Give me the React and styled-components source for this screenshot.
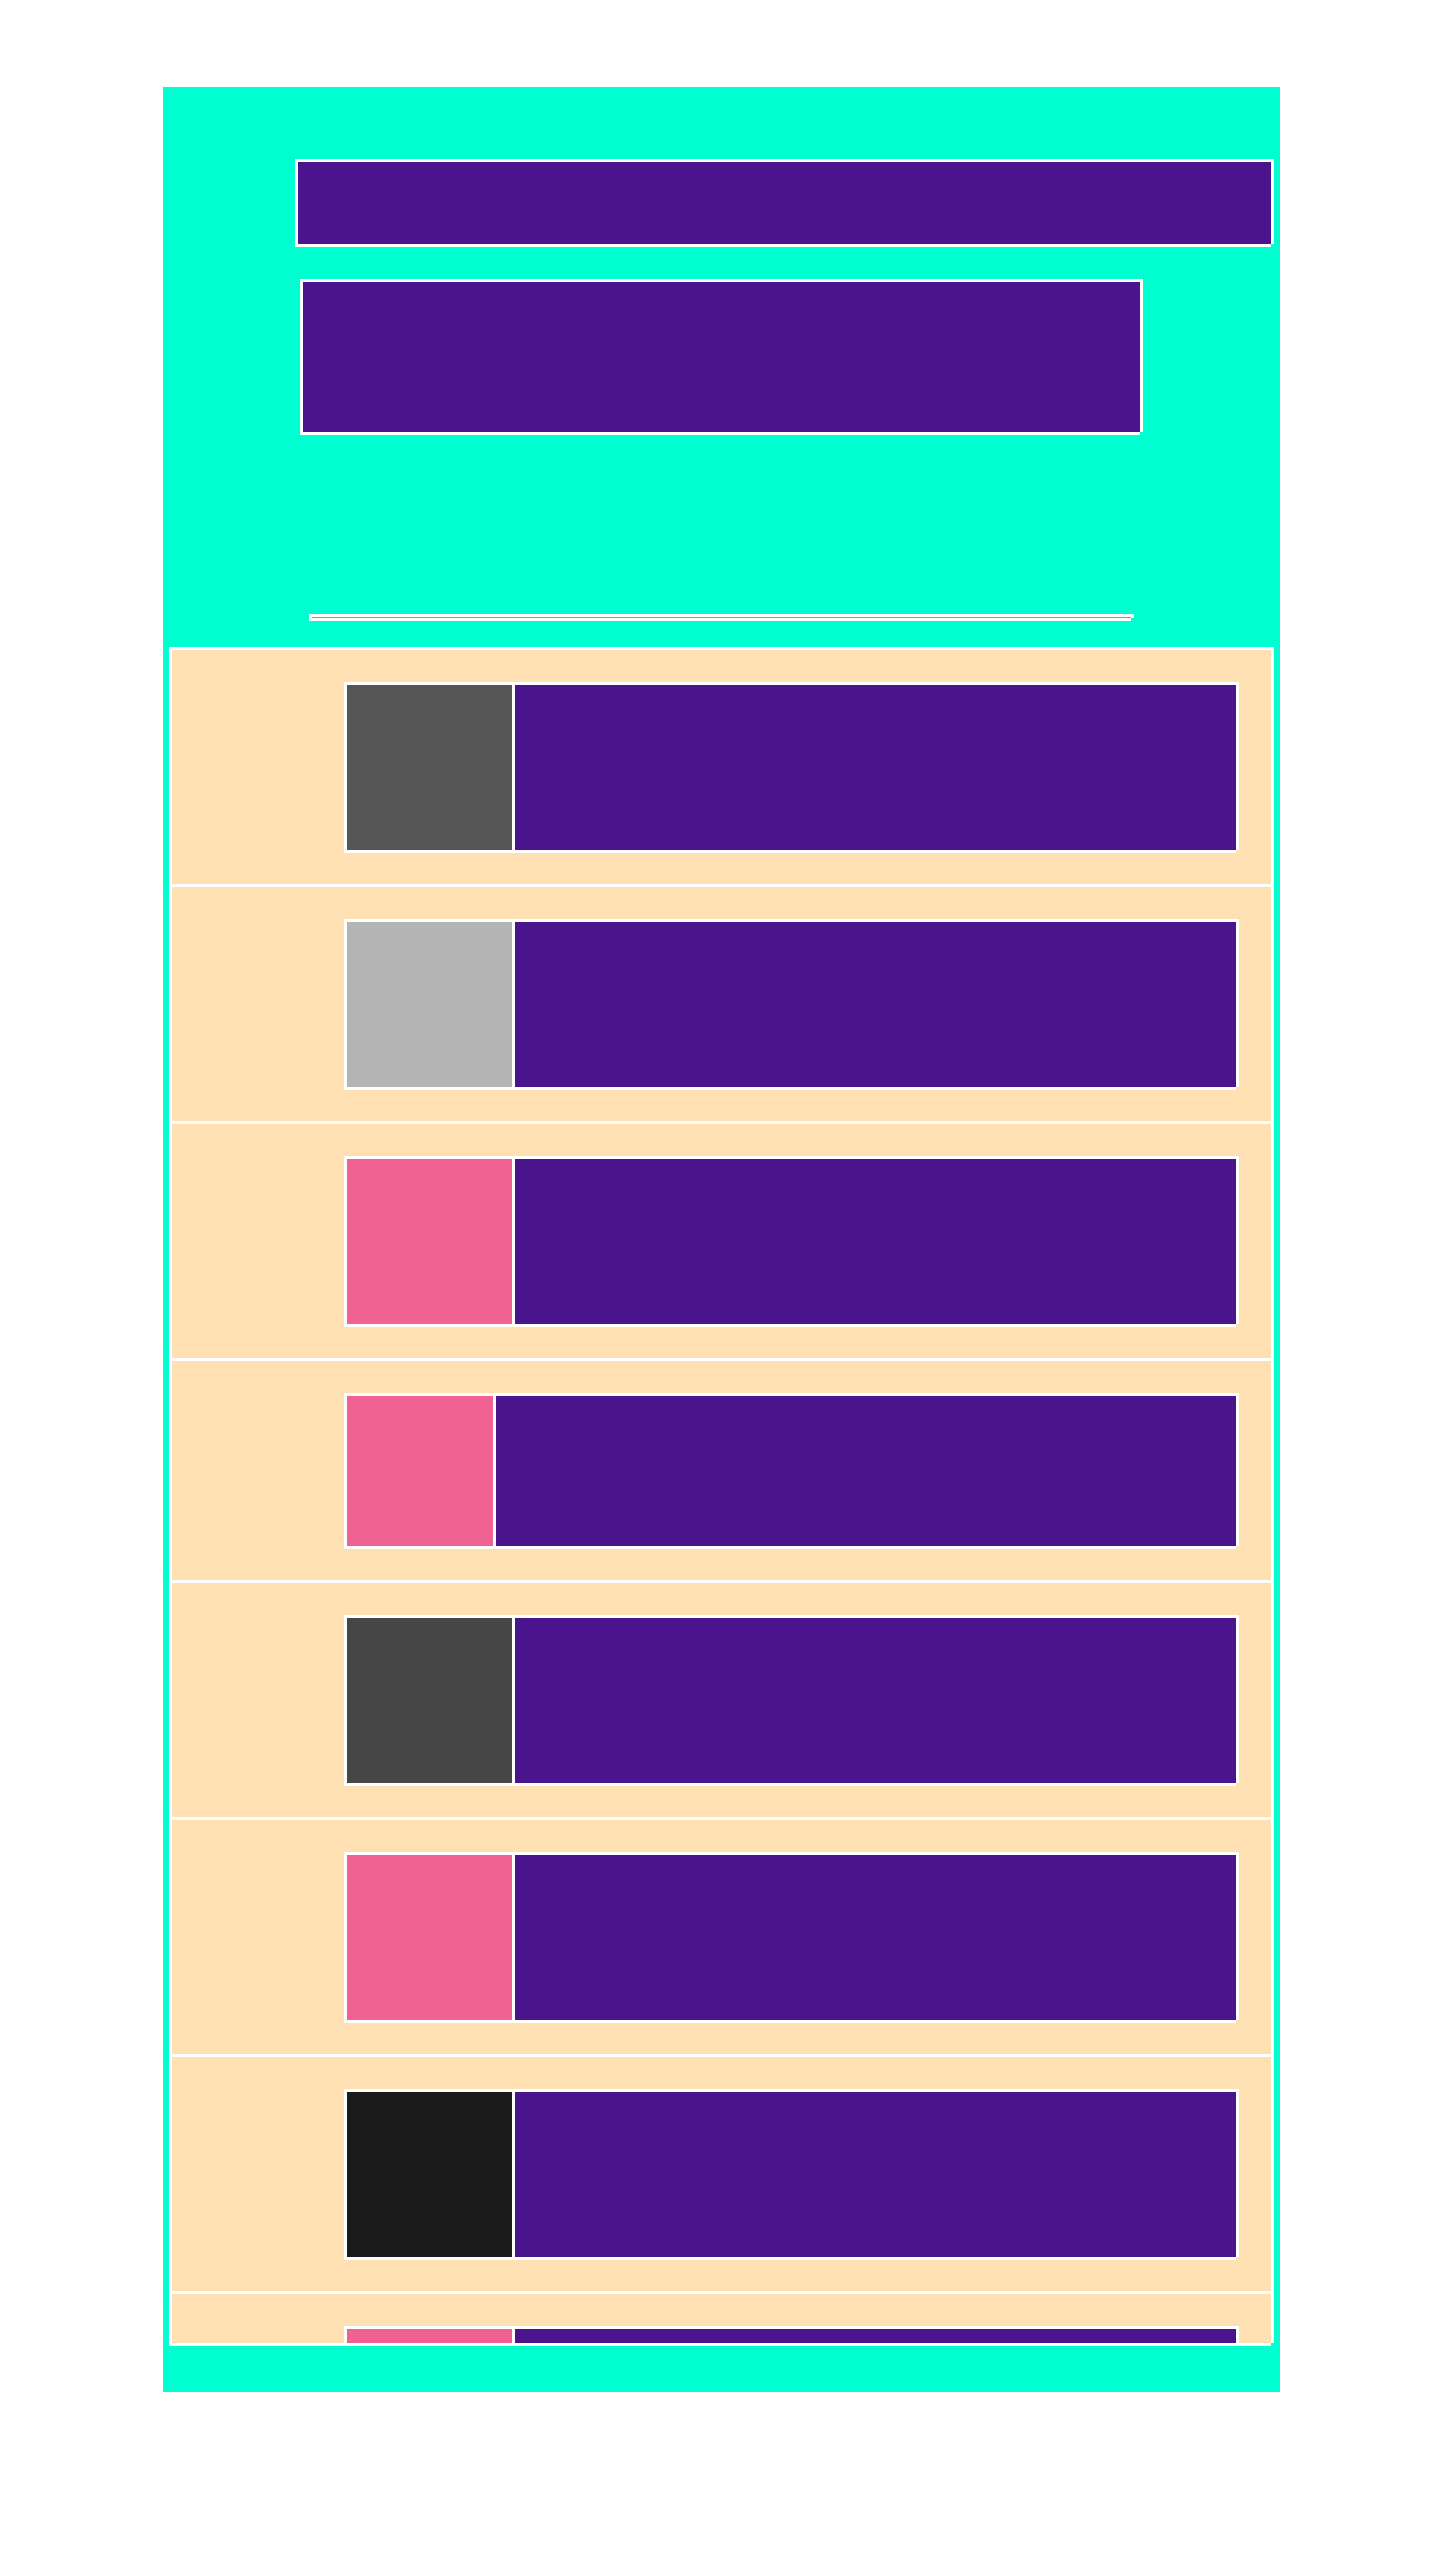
import React from "react";
import styled, { createGlobalStyle, css } from "styled-components";

const Global = createGlobalStyle`
  html, body { margin: 0; padding: 0; background: #ffffff; }
  body { font-family: "Liberation Sans", Arial, sans-serif; }
`;

const framed = css`
  border-left: 3px solid #ffffff;
  border-top: 3px solid #ffffff;
  box-shadow: 3px 0 0 #ffffff, 0 3px 0 #ffffff;
  box-sizing: border-box;
`;

const Page = styled.div`
  padding: 87px 0 168px 163px;
`;

const Stage = styled.main`
  width: 1117px;
  height: 2305px;
  background: #00ffd0;
  display: flex;
  flex-direction: column;
  align-items: flex-start;
  box-sizing: border-box;
  padding-top: 72px;
`;

const TitleBar = styled.header`
  ${framed}
  width: 976px;
  height: 85px;
  margin-left: 132px;
  background: #4a148c;
`;

const Banner = styled.section`
  ${framed}
  width: 840px;
  height: 153px;
  margin-left: 137px;
  margin-top: 35px;
  background: #4a148c;
`;

const Rule = styled.div`
  ${framed}
  width: 822px;
  height: 4px;
  margin-left: 146px;
  margin-top: 182px;
  background: #e8689a;
`;

const Panel = styled.div`
  border-left: 3px solid #ffffff;
  box-shadow: 3px 0 0 #ffffff, 0 3px 0 #ffffff;
  box-sizing: border-box;
  width: 1102px;
  height: 1696px;
  margin-left: 6px;
  margin-top: 29px;
  background: #ffe0b2;
  overflow: hidden;
  display: flex;
  flex-direction: column;
`;

const Row = styled.div`
  flex: none;
  border-top: 3px solid #ffffff;
  padding: 32px 35px 34px 172px;
  display: flex;
`;

const Item = styled.div`
  ${framed}
  width: 892px;
  display: flex;
  background: #ffffff;
`;

const Thumb = styled.div`
  flex: none;
  width: ${(p) => p.$w}px;
  height: ${(p) => p.$h}px;
  background: ${(p) => p.$color};
`;

const Body = styled.div`
  flex: 1;
  margin-left: 3px;
  background: #4a148c;
`;

const rows = [
  { color: "#555555", w: 165, h: 165 },
  { color: "#b4b4b4", w: 165, h: 165 },
  { color: "#f06292", w: 165, h: 165 },
  { color: "#f06292", w: 146, h: 150 },
  { color: "#464646", w: 165, h: 165 },
  { color: "#f06292", w: 165, h: 165 },
  { color: "#1b1b1b", w: 165, h: 165 },
  { color: "#f06292", w: 165, h: 165 },
];

export default function App() {
  return (
    <>
      <Global />
      <Page>
        <Stage>
          <TitleBar />
          <Banner />
          <Rule />
          <Panel>
            {rows.map((r, i) => (
              <Row key={i}>
                <Item>
                  <Thumb $color={r.color} $w={r.w} $h={r.h} />
                  <Body />
                </Item>
              </Row>
            ))}
          </Panel>
        </Stage>
      </Page>
    </>
  );
}
